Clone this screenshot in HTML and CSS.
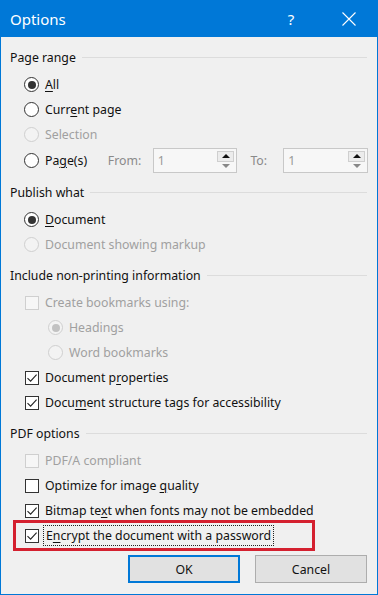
FILE: index.html
```html
<!DOCTYPE html>
<html lang="en">
<head>
    <meta charset="UTF-8">
    <meta name="viewport" content="width=device-width, initial-scale=1.0">
    <title>Options</title>
    <link rel="stylesheet" href="styles.css">
</head>
<body>
    <div class="dialog">
        <div class="titlebar">
            <span class="title">Options</span>
            <span class="help">?</span>
            <span class="close">
                <svg width="14" height="14" viewBox="0 0 14 14"><path d="M0.5 0.5 L13.5 13.5 M13.5 0.5 L0.5 13.5" stroke="#fff" stroke-width="1.1" fill="none"/></svg>
            </span>
        </div>

        <div class="content">
            <section class="group">
                <div class="group-head"><span>Page range</span></div>
                <div class="row"><span class="radio checked"></span><span><u>A</u>ll</span></div>
                <div class="row"><span class="radio"></span><span>Curr<u>e</u>nt page</span></div>
                <div class="row disabled"><span class="radio"></span><span>Selection</span></div>
                <div class="row pages">
                    <span class="radio"></span>
                    <span class="pages-label">Pa<u>g</u>e(s)</span>
                    <span class="muted from-label">From:</span>
                    <div class="spin">
                        <span class="spin-value">1</span>
                        <span class="spin-buttons">
                            <span class="spin-btn"><span class="arrow up"></span></span>
                            <span class="spin-btn"><span class="arrow down"></span></span>
                        </span>
                    </div>
                    <span class="muted to-label">To:</span>
                    <div class="spin">
                        <span class="spin-value">1</span>
                        <span class="spin-buttons">
                            <span class="spin-btn"><span class="arrow up"></span></span>
                            <span class="spin-btn"><span class="arrow down"></span></span>
                        </span>
                    </div>
                </div>
            </section>

            <section class="group">
                <div class="group-head"><span>Publish what</span></div>
                <div class="row"><span class="radio checked"></span><span><u>D</u>ocument</span></div>
                <div class="row disabled"><span class="radio"></span><span>Document showing markup</span></div>
            </section>

            <section class="group">
                <div class="group-head"><span>Include non-printing information</span></div>
                <div class="row disabled"><span class="check"></span><span>Create bookmarks using:</span></div>
                <div class="row sub disabled"><span class="radio checked"></span><span>Headings</span></div>
                <div class="row sub disabled"><span class="radio"></span><span>Word bookmarks</span></div>
                <div class="row"><span class="check checked"><svg width="12" height="12" viewBox="0 0 12 12"><path d="M1.5 6.2 L4.6 9.2 L10.6 2.6" stroke="#222" stroke-width="1.1" fill="none"/></svg></span><span>Document p<u>r</u>operties</span></div>
                <div class="row"><span class="check checked"><svg width="12" height="12" viewBox="0 0 12 12"><path d="M1.5 6.2 L4.6 9.2 L10.6 2.6" stroke="#222" stroke-width="1.1" fill="none"/></svg></span><span>Docu<u>m</u>ent structure tags for accessibility</span></div>
            </section>

            <section class="group">
                <div class="group-head"><span>PDF options</span></div>
                <div class="row disabled"><span class="check"></span><span>PDF/A compliant</span></div>
                <div class="row"><span class="check"></span><span>Optimize for image <u>q</u>uality</span></div>
                <div class="row"><span class="check checked"><svg width="12" height="12" viewBox="0 0 12 12"><path d="M1.5 6.2 L4.6 9.2 L10.6 2.6" stroke="#222" stroke-width="1.1" fill="none"/></svg></span><span>Bitmap te<u>x</u>t when fonts may not be embedded</span></div>
                <div class="row highlight"><span class="check checked"><svg width="12" height="12" viewBox="0 0 12 12"><path d="M1.5 6.2 L4.6 9.2 L10.6 2.6" stroke="#222" stroke-width="1.1" fill="none"/></svg></span><span class="focus">E<u>n</u>crypt the document with a password</span></div>
            </section>

            <div class="buttons">
                <button class="btn default">OK</button>
                <button class="btn">Cancel</button>
            </div>
        </div>
    </div>
</body>
</html>
```

FILE: styles.css
```css
body {
    margin: 0;
    font-family: "Noto Sans", "Open Sans", sans-serif;
    font-size: 12.3px;
    color: #111;
    background: #f0f0f0;
}

.dialog {
    width: 378px;
    height: 595px;
    box-sizing: border-box;
    border: 1px solid #0078d7;
    border-top: none;
    display: flex;
    flex-direction: column;
    background: #f0f0f0;
}

.titlebar {
    height: 37px;
    flex-shrink: 0;
    background: #0078d7;
    color: #fff;
    display: flex;
    align-items: center;
    padding: 0 5px 0 9px;
}

.title {
    flex: 1;
    font-size: 15px;
}

.help {
    width: 46px;
    text-align: center;
    font-size: 15px;
    margin-right: 12px;
}

.close {
    width: 46px;
    display: flex;
    justify-content: center;
    align-items: center;
}

.content {
    padding: 10px 9px 0 9px;
    display: flex;
    flex-direction: column;
}

.group + .group {
    margin-top: 8px;
}

.group-head {
    height: 20px;
    display: flex;
    align-items: center;
    margin-bottom: 5px;
}

.group-head::after {
    content: "";
    flex: 1;
    height: 1px;
    background: #dcdcdc;
    margin: 0 1px 0 6px;
}

.row {
    height: 25px;
    display: flex;
    align-items: center;
    padding-left: 14px;
}

.row.sub {
    padding-left: 38px;
}

.row.disabled {
    color: #a0a0a0;
}

u {
    text-decoration-thickness: 1px;
    text-underline-offset: 2px;
}

.radio {
    width: 15px;
    height: 15px;
    box-sizing: border-box;
    border: 1px solid #333;
    border-radius: 50%;
    background: #fff;
    margin-right: 6px;
    display: flex;
    align-items: center;
    justify-content: center;
    flex-shrink: 0;
}

.radio.checked::after {
    content: "";
    width: 8px;
    height: 8px;
    border-radius: 50%;
    background: #333;
}

.disabled .radio {
    border-color: #cfcfcf;
    background: #f3f3f3;
}

.disabled .radio.checked::after {
    background: #c2c2c2;
}

.check {
    width: 14px;
    height: 14px;
    box-sizing: border-box;
    border: 1px solid #333;
    background: #fff;
    margin: 0 6px 0 1px;
    display: flex;
    align-items: center;
    justify-content: center;
    flex-shrink: 0;
}

.disabled .check {
    border-color: #cfcfcf;
    background: #f6f6f6;
}

.row.pages {
    height: 27px;
}

.pages-label {
    width: 63px;
}

.muted {
    color: #8a8a8a;
}

.from-label {
    width: 45px;
}

.to-label {
    width: 33px;
    margin-left: 13px;
}

.spin {
    width: 85px;
    height: 25px;
    box-sizing: border-box;
    border: 1px solid #c8c8c8;
    background: #f7f7f7;
    display: flex;
    align-items: center;
    padding: 2px;
}

.spin-value {
    flex: 1;
    color: #999;
    padding-left: 2px;
}

.spin-buttons {
    width: 17px;
    height: 19px;
    display: flex;
    flex-direction: column;
}

.spin-btn {
    flex: 1;
    display: flex;
    align-items: center;
    justify-content: center;
}

.spin-btn:first-child {
    border: 1px solid #cfcfcf;
    background: #ececec;
}

.arrow {
    width: 0;
    height: 0;
    border-left: 4px solid transparent;
    border-right: 4px solid transparent;
}

.arrow.up {
    border-bottom: 4px solid #111;
}

.arrow.down {
    border-top: 4px solid #888;
}

.highlight {
    width: 296px;
    box-sizing: border-box;
    margin-left: 6px;
    padding-left: 8px;
    outline: 3px solid #d4202f;
}

.focus {
    outline: 1px dotted #222;
    outline-offset: 1px;
    padding: 0 1px;
}

.buttons {
    display: flex;
    justify-content: flex-end;
    gap: 15px;
    margin-top: 7px;
    padding-right: 1px;
}

.btn {
    width: 112px;
    height: 28px;
    box-sizing: border-box;
    border: 1px solid #adadad;
    background: #e1e1e1;
    font-family: inherit;
    font-size: 12.3px;
    color: #111;
    padding: 0;
}

.btn.default {
    border: 2px solid #0078d7;
}
```
